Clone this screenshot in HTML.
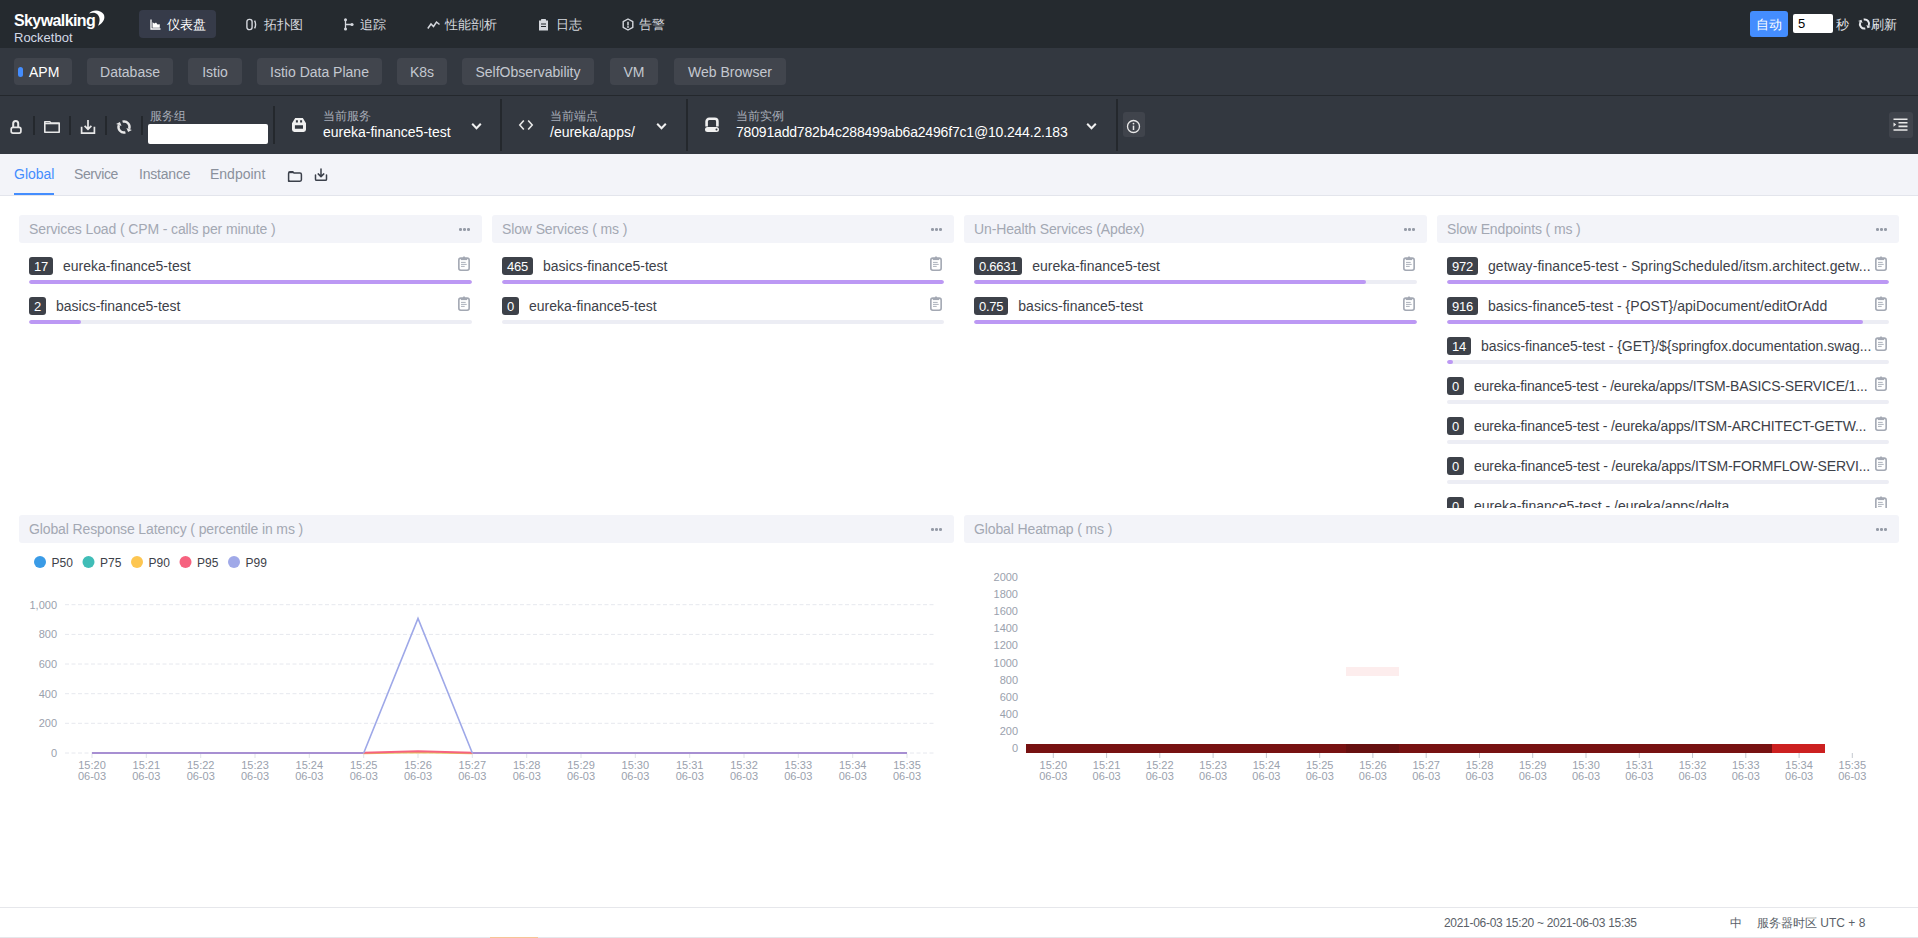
<!DOCTYPE html>
<html><head><meta charset="utf-8">
<style>
*{margin:0;padding:0;box-sizing:border-box}
html,body{width:1918px;height:938px;overflow:hidden;background:#fff;font-family:"Liberation Sans",sans-serif;position:relative}
.a{position:absolute}
.hdr{left:0;top:0;width:1918px;height:48px;background:#252a2f}
.bar2{left:0;top:48px;width:1918px;height:47px;background:#333840}
.bar2line{left:0;top:95px;width:1918px;height:1px;background:#24282d}
.tool{left:0;top:96px;width:1918px;height:58px;background:#333840}
.subnav{left:0;top:154px;width:1918px;height:41px;background:#f3f4f9}
.subline{left:0;top:195px;width:1918px;height:1px;background:#e3e5ec}
.nav{color:#d5d8de;font-size:13px;line-height:16px;top:17px;white-space:nowrap}
.navact{left:139px;top:10px;width:77px;height:28px;background:#363b49;border-radius:4px}
.tab{top:58px;height:27px;background:#41454d;border-radius:4px;color:#c4c8d0;font-size:14px;line-height:29px;text-align:center;white-space:nowrap}
.sep{width:2px;background:#24282d}
.lbl{color:#a8adb8;font-size:12px;line-height:14px;top:109px;white-space:nowrap}
.val{color:#fff;font-size:14px;line-height:16px;top:124px;white-space:nowrap}
.sn{top:166px;font-size:14px;line-height:16px;color:#8a909c;white-space:nowrap}
.ph{height:28px;background:#f3f4f9;border-radius:3px}
.pt{font-size:14px;line-height:16px;color:#a3a8b3;white-space:nowrap;letter-spacing:-0.12px}
.dots{width:12px;height:3px}
.badge{height:18px;background:#3d4149;color:#fff;border-radius:3px;font-size:13px;line-height:20px;padding:0 5px;white-space:nowrap;letter-spacing:-0.25px;overflow:hidden}
.itxt{font-size:14px;line-height:16px;color:#3d4149;white-space:nowrap}
.trk{height:4px;background:#ecedf4;border-radius:2px;overflow:hidden}
.fil{height:4px;background:#bc98f4;border-radius:2px}
.clip{width:12px;height:15px}
.ax{font-size:12px;line-height:12px;color:#9aa1ad;white-space:nowrap}
.foot{top:907px;left:0;width:1918px;height:1px;background:#e6e7eb}
</style></head><body>
<!-- header -->
<div class="a hdr"></div>
<div class="a" style="left:14px;top:12px;color:#fff;font-weight:bold;font-size:16px;line-height:18px;letter-spacing:-0.6px">Skywalking</div>
<div class="a" style="left:14px;top:31px;color:#d3d9e6;font-size:13px;line-height:13px">Rocketbot</div>
<div class="a navact"></div>
<div class="a nav" style="left:167px;color:#fff">仪表盘</div>
<div class="a nav" style="left:264px">拓扑图</div>
<div class="a nav" style="left:360px">追踪</div>
<div class="a nav" style="left:445px">性能剖析</div>
<div class="a nav" style="left:556px">日志</div>
<div class="a nav" style="left:639px">告警</div>

<div class="a" style="left:1750px;top:11px;width:38px;height:26px;background:#448dfe;border-radius:3px;color:#fff;font-size:13px;line-height:28px;text-align:center">自动</div>
<div class="a" style="left:1793px;top:14px;width:40px;height:19px;background:#fff;border-radius:2px;color:#000;font-size:13px;line-height:20px;padding-left:5px">5</div>
<div class="a nav" style="left:1836px;top:17px;color:#e6e8ec">秒</div>
<div class="a nav" style="left:1871px;top:17px;color:#e6e8ec">刷新</div>

<!-- bar2 -->
<div class="a bar2"></div>
<div class="a bar2line"></div>
<div class="a tab" style="left:14px;width:58px;background:#41454d;color:#fff;text-align:left;padding-left:15px">APM</div>
<div class="a" style="left:18px;top:67px;width:5px;height:10px;background:#448dfe;border-radius:3px"></div>
<div class="a tab" style="left:87px;width:86px">Database</div>
<div class="a tab" style="left:188px;width:54px">Istio</div>
<div class="a tab" style="left:257px;width:125px">Istio Data Plane</div>
<div class="a tab" style="left:397px;width:50px">K8s</div>
<div class="a tab" style="left:462px;width:132px">SelfObservability</div>
<div class="a tab" style="left:610px;width:48px">VM</div>
<div class="a tab" style="left:674px;width:112px">Web Browser</div>

<!-- toolbar -->
<div class="a tool"></div>
<div class="a sep" style="left:33px;top:116px;height:19px"></div>
<div class="a sep" style="left:69px;top:116px;height:19px"></div>
<div class="a sep" style="left:105px;top:116px;height:19px"></div>
<div class="a sep" style="left:141px;top:116px;height:19px"></div>
<div class="a lbl" style="left:150px">服务组</div>
<div class="a" style="left:148px;top:124px;width:120px;height:20px;background:#fff;border-radius:2px"></div>
<div class="a sep" style="left:273px;top:106px;height:38px"></div>
<div class="a lbl" style="left:323px">当前服务</div>
<div class="a val" style="left:323px">eureka-finance5-test</div>
<div class="a sep" style="left:500px;top:99px;height:52px"></div>
<div class="a lbl" style="left:550px">当前端点</div>
<div class="a val" style="left:550px">/eureka/apps/</div>
<div class="a sep" style="left:686px;top:99px;height:52px"></div>
<div class="a lbl" style="left:736px">当前实例</div>
<div class="a val" style="left:736px;letter-spacing:-0.18px">78091add782b4c288499ab6a2496f7c1@10.244.2.183</div>
<div class="a sep" style="left:1116px;top:99px;height:52px"></div>
<div class="a" style="left:1123px;top:112px;width:22px;height:25px;background:#40444c;border-radius:3px"></div>
<div class="a" style="left:1889px;top:112px;width:24px;height:26px;background:#40444c;border-radius:3px"></div>

<!-- subnav -->
<div class="a subnav"></div>
<div class="a subline"></div>
<div class="a sn" style="left:14px;color:#448dfe">Global</div>
<div class="a" style="left:14px;top:193px;width:40px;height:2px;background:#448dfe"></div>
<div class="a sn" style="left:74px;letter-spacing:-0.4px">Service</div>
<div class="a sn" style="left:139px;letter-spacing:-0.2px">Instance</div>
<div class="a sn" style="left:210px">Endpoint</div>

<!--I-->
<!-- nav icons -->
<svg class="a" style="left:150px;top:19px" width="11" height="11" viewBox="0 0 11 11"><path d="M1 0.5V10H10.5" fill="none" stroke="#fff" stroke-width="1.3"/><path d="M2.5 8.8V3.2L4.5 4.6L6 3.6L7.6 5.6L9.8 5.2V8.8Z" fill="#fff"/></svg>
<svg class="a" style="left:246px;top:18px" width="12" height="13" viewBox="0 0 12 13"><rect x="0.9" y="1.4" width="5.2" height="10.2" rx="2.3" fill="none" stroke="#d5d8de" stroke-width="1.4"/><path d="M8.6 2.6Q10.6 6.5 8.6 10.4" fill="none" stroke="#d5d8de" stroke-width="1.4"/></svg>
<svg class="a" style="left:343px;top:18px" width="12" height="13" viewBox="0 0 12 13"><path d="M2.5 1V12M2.5 6.5H8.5" fill="none" stroke="#d5d8de" stroke-width="1.3"/><circle cx="2.5" cy="1.8" r="1.5" fill="#d5d8de"/><circle cx="2.5" cy="11" r="1.5" fill="#d5d8de"/><circle cx="9" cy="6.5" r="1.6" fill="#d5d8de"/></svg>
<svg class="a" style="left:427px;top:19px" width="13" height="11" viewBox="0 0 13 11"><path d="M0.8 9.5L4 5L6.5 7.5L9.5 3L12.5 5.5" fill="none" stroke="#d5d8de" stroke-width="1.5"/></svg>
<svg class="a" style="left:538px;top:18px" width="11" height="13" viewBox="0 0 11 13"><path d="M1 2.5H10V12.5H1Z" fill="#d5d8de"/><rect x="3" y="1" width="5" height="2.5" rx="0.6" fill="#d5d8de"/><path d="M3 6H8M3 8.5H8" stroke="#25292e" stroke-width="1.1"/></svg>
<svg class="a" style="left:622px;top:18px" width="12" height="13" viewBox="0 0 12 13"><path d="M6 1L10.8 3.6V9.4L6 12L1.2 9.4V3.6Z" fill="none" stroke="#d5d8de" stroke-width="1.4" stroke-linejoin="round"/><path d="M6 3.8V7.4" stroke="#d5d8de" stroke-width="1.5"/><circle cx="6" cy="9" r="0.9" fill="#d5d8de"/></svg>
<svg class="a" style="left:1857px;top:16px" width="15" height="16" viewBox="0 0 18 16"><g transform="rotate(5 9 8)"><path d="M7.58 2.69A5.5 5.5 0 0 1 14.17 9.88" fill="none" stroke="#e6e8ec" stroke-width="2.4"/><path d="M16.9 10.9L11.4 8.9L13.1 12.9Z" fill="#e6e8ec"/><path d="M10.42 13.31A5.5 5.5 0 0 1 3.83 6.12" fill="none" stroke="#e6e8ec" stroke-width="2.4"/><path d="M1.1 5.1L6.6 7.1L4.9 3.1Z" fill="#e6e8ec"/></g></svg>
<!-- toolbar icons -->
<svg class="a" style="left:9px;top:119px" width="14" height="16" viewBox="0 0 14 16"><path d="M4.2 8V4.4A2.5 2.5 0 0 1 9.2 4.4V8" fill="none" stroke="#e8e8e8" stroke-width="2"/><rect x="2.2" y="8.3" width="9.7" height="5.8" rx="1.8" fill="none" stroke="#e8e8e8" stroke-width="1.7"/></svg>
<svg class="a" style="left:43px;top:120px" width="18" height="14" viewBox="0 0 18 14"><path d="M1.8 12.2V1.8H6.8L8 3H16.2V12.2Z" fill="none" stroke="#e8e8e8" stroke-width="1.6" stroke-linejoin="round"/><path d="M1.8 3.6H16.2" stroke="#e8e8e8" stroke-width="1.4"/></svg>
<svg class="a" style="left:80px;top:119px" width="16" height="16" viewBox="0 0 16 16"><path d="M8 1V10.2M4.6 6.8L8 10.2L11.4 6.8" fill="none" stroke="#e8e8e8" stroke-width="1.7"/><path d="M1.6 7.8V14.2H14.4V7.8" fill="none" stroke="#e8e8e8" stroke-width="1.7"/></svg>
<svg class="a" style="left:115px;top:119px" width="18" height="16" viewBox="0 0 18 16"><path d="M7.58 2.69A5.5 5.5 0 0 1 14.17 9.88" fill="none" stroke="#e8e8e8" stroke-width="2.4"/><path d="M16.9 10.9L11.4 8.9L13.1 12.9Z" fill="#e8e8e8"/><path d="M10.42 13.31A5.5 5.5 0 0 1 3.83 6.12" fill="none" stroke="#e8e8e8" stroke-width="2.4"/><path d="M1.1 5.1L6.6 7.1L4.9 3.1Z" fill="#e8e8e8"/></svg>
<svg class="a" style="left:291px;top:117px" width="16" height="16" viewBox="0 0 16 16"><path fill="#f0f0f0" fill-rule="evenodd" d="M4.2 0.9H11.8L15 6.2V12.6A2.4 2.4 0 0 1 12.6 15H3.4A2.4 2.4 0 0 1 1 12.6V6.2ZM4.9 3.3V5.6H6.9V3.3ZM9.1 3.3V5.6H11.1V3.3ZM3.9 8.3V11.8H12V8.3Z"/></svg>
<svg class="a" style="left:518px;top:119px" width="16" height="12" viewBox="0 0 16 12"><path d="M5.8 1.5L1.8 6L5.8 10.5M10.2 1.5L14.2 6L10.2 10.5" fill="none" stroke="#e8e8e8" stroke-width="1.6"/></svg>
<svg class="a" style="left:704px;top:117px" width="16" height="16" viewBox="0 0 16 16"><path d="M2.6 9.5V4.4A2.6 2.6 0 0 1 5.2 1.8H10.8A2.6 2.6 0 0 1 13.4 4.4V9.5" fill="none" stroke="#f0f0f0" stroke-width="2.6"/><rect x="1" y="10" width="14" height="5" rx="2.5" fill="#f0f0f0"/><circle cx="12.5" cy="12.5" r="1" fill="#333840"/></svg>
<svg class="a" style="left:471px;top:122px" width="11" height="9" viewBox="0 0 11 9"><path d="M1.2 1.8L5.5 6.2L9.8 1.8" fill="none" stroke="#f0f0f0" stroke-width="2"/></svg>
<svg class="a" style="left:656px;top:122px" width="11" height="9" viewBox="0 0 11 9"><path d="M1.2 1.8L5.5 6.2L9.8 1.8" fill="none" stroke="#f0f0f0" stroke-width="2"/></svg>
<svg class="a" style="left:1086px;top:122px" width="11" height="9" viewBox="0 0 11 9"><path d="M1.2 1.8L5.5 6.2L9.8 1.8" fill="none" stroke="#f0f0f0" stroke-width="2"/></svg>
<svg class="a" style="left:1126px;top:119px" width="16" height="16" viewBox="0 0 16 16"><circle cx="7.5" cy="7.5" r="6" fill="none" stroke="#e8e8e8" stroke-width="1.3"/><path d="M7.5 6.6V11" stroke="#e8e8e8" stroke-width="1.5"/><circle cx="7.5" cy="4.6" r="0.9" fill="#e8e8e8"/></svg>
<svg class="a" style="left:1892px;top:117px" width="17" height="17" viewBox="0 0 17 17"><path d="M1.5 2.2H15.5M6.5 5.8H15.5M6.5 9.4H15.5M1.5 13H15.5" stroke="#e8e8e8" stroke-width="1.6"/><path d="M1.5 5.4L4.2 7.6L1.5 9.8Z" fill="#e8e8e8"/></svg>
<!-- subnav icons -->
<svg class="a" style="left:287px;top:170px" width="16" height="13" viewBox="0 0 16 13"><path d="M1.6 11.2V3.4Q1.6 1.8 3 1.8H5.8L7 3H13Q14.4 3 14.4 4.4V9.8Q14.4 11.2 13 11.2H3Q1.6 11.2 1.6 9.8Z" fill="none" stroke="#3b404b" stroke-width="1.5" stroke-linejoin="round"/><path d="M2 2.5H6.2" stroke="#3b404b" stroke-width="1.4"/></svg>
<svg class="a" style="left:314px;top:168px" width="14" height="14" viewBox="0 0 14 14"><path d="M7 1V8.6M4.2 5.9L7 8.6L9.8 5.9" fill="none" stroke="#3b404b" stroke-width="1.5" stroke-linecap="round" stroke-linejoin="round"/><path d="M1.5 7V11.2Q1.5 12.3 2.6 12.3H11.4Q12.5 12.3 12.5 11.2V7" fill="none" stroke="#3b404b" stroke-width="1.5" stroke-linecap="round"/></svg>
<!-- logo crescent -->
<svg class="a" style="left:88px;top:9px" width="18" height="18" viewBox="0 0 18 18"><path d="M1 4.5C4 0.5 12 0 15.5 5C18 9 15 14.5 10 16.8C12.5 12 12 7.5 9 5C6.5 3 3.5 3.5 1 4.5Z" fill="#fff"/></svg>
<!--/I-->

<!-- PANELS -->
<!--P-->
<div class="a ph" style="left:19px;top:215px;width:463px"></div>
<div class="a pt" style="left:29px;top:221px">Services Load ( CPM - calls per minute )</div>
<div class="a" style="left:459px;top:228px;width:2.6px;height:2.6px;border-radius:50%;background:#959ba7"></div>
<div class="a" style="left:463px;top:228px;width:2.6px;height:2.6px;border-radius:50%;background:#959ba7"></div>
<div class="a" style="left:467px;top:228px;width:2.6px;height:2.6px;border-radius:50%;background:#959ba7"></div>
<div class="a ph" style="left:492px;top:215px;width:462px"></div>
<div class="a pt" style="left:502px;top:221px">Slow Services ( ms )</div>
<div class="a" style="left:931px;top:228px;width:2.6px;height:2.6px;border-radius:50%;background:#959ba7"></div>
<div class="a" style="left:935px;top:228px;width:2.6px;height:2.6px;border-radius:50%;background:#959ba7"></div>
<div class="a" style="left:939px;top:228px;width:2.6px;height:2.6px;border-radius:50%;background:#959ba7"></div>
<div class="a ph" style="left:964px;top:215px;width:463px"></div>
<div class="a pt" style="left:974px;top:221px">Un-Health Services (Apdex)</div>
<div class="a" style="left:1404px;top:228px;width:2.6px;height:2.6px;border-radius:50%;background:#959ba7"></div>
<div class="a" style="left:1408px;top:228px;width:2.6px;height:2.6px;border-radius:50%;background:#959ba7"></div>
<div class="a" style="left:1412px;top:228px;width:2.6px;height:2.6px;border-radius:50%;background:#959ba7"></div>
<div class="a ph" style="left:1437px;top:215px;width:462px"></div>
<div class="a pt" style="left:1447px;top:221px">Slow Endpoints ( ms )</div>
<div class="a" style="left:1876px;top:228px;width:2.6px;height:2.6px;border-radius:50%;background:#959ba7"></div>
<div class="a" style="left:1880px;top:228px;width:2.6px;height:2.6px;border-radius:50%;background:#959ba7"></div>
<div class="a" style="left:1884px;top:228px;width:2.6px;height:2.6px;border-radius:50%;background:#959ba7"></div>
<div class="a" style="left:29px;top:257px;width:443px;height:18px;display:flex;align-items:center"><div class="badge" style="flex:none">17</div><div class="itxt" style="flex:1;min-width:0;margin-left:10px;overflow:hidden;padding-right:0;letter-spacing:0px">eureka-finance5-test</div><div style="flex:none;width:12px;height:18px"></div></div>
<svg class="a" style="left:458px;top:256px" width="12" height="15" viewBox="0 0 12 15"><rect x="0.85" y="2.1" width="10.3" height="12.1" rx="1.9" fill="none" stroke="#a3a8b3" stroke-width="1.6"/><rect x="4.9" y="0.6" width="2.2" height="2" rx="0.6" fill="#a3a8b3"/><path d="M2.8 3.5H9.2" stroke="#a3a8b3" stroke-width="1.2"/><path d="M3 6.4H7.7M3 8.4H8.7M3 10.4H6.7" stroke="#a3a8b3" stroke-width="0.9"/></svg>
<div class="a trk" style="left:29px;top:280px;width:443px"><div class="fil" style="width:100.00%"></div></div>
<div class="a" style="left:29px;top:297px;width:443px;height:18px;display:flex;align-items:center"><div class="badge" style="flex:none">2</div><div class="itxt" style="flex:1;min-width:0;margin-left:10px;overflow:hidden;padding-right:0;letter-spacing:0px">basics-finance5-test</div><div style="flex:none;width:12px;height:18px"></div></div>
<svg class="a" style="left:458px;top:296px" width="12" height="15" viewBox="0 0 12 15"><rect x="0.85" y="2.1" width="10.3" height="12.1" rx="1.9" fill="none" stroke="#a3a8b3" stroke-width="1.6"/><rect x="4.9" y="0.6" width="2.2" height="2" rx="0.6" fill="#a3a8b3"/><path d="M2.8 3.5H9.2" stroke="#a3a8b3" stroke-width="1.2"/><path d="M3 6.4H7.7M3 8.4H8.7M3 10.4H6.7" stroke="#a3a8b3" stroke-width="0.9"/></svg>
<div class="a trk" style="left:29px;top:320px;width:443px"><div class="fil" style="width:11.76%"></div></div>
<div class="a" style="left:502px;top:257px;width:442px;height:18px;display:flex;align-items:center"><div class="badge" style="flex:none">465</div><div class="itxt" style="flex:1;min-width:0;margin-left:10px;overflow:hidden;padding-right:0;letter-spacing:0px">basics-finance5-test</div><div style="flex:none;width:12px;height:18px"></div></div>
<svg class="a" style="left:930px;top:256px" width="12" height="15" viewBox="0 0 12 15"><rect x="0.85" y="2.1" width="10.3" height="12.1" rx="1.9" fill="none" stroke="#a3a8b3" stroke-width="1.6"/><rect x="4.9" y="0.6" width="2.2" height="2" rx="0.6" fill="#a3a8b3"/><path d="M2.8 3.5H9.2" stroke="#a3a8b3" stroke-width="1.2"/><path d="M3 6.4H7.7M3 8.4H8.7M3 10.4H6.7" stroke="#a3a8b3" stroke-width="0.9"/></svg>
<div class="a trk" style="left:502px;top:280px;width:442px"><div class="fil" style="width:100.00%"></div></div>
<div class="a" style="left:502px;top:297px;width:442px;height:18px;display:flex;align-items:center"><div class="badge" style="flex:none">0</div><div class="itxt" style="flex:1;min-width:0;margin-left:10px;overflow:hidden;padding-right:0;letter-spacing:0px">eureka-finance5-test</div><div style="flex:none;width:12px;height:18px"></div></div>
<svg class="a" style="left:930px;top:296px" width="12" height="15" viewBox="0 0 12 15"><rect x="0.85" y="2.1" width="10.3" height="12.1" rx="1.9" fill="none" stroke="#a3a8b3" stroke-width="1.6"/><rect x="4.9" y="0.6" width="2.2" height="2" rx="0.6" fill="#a3a8b3"/><path d="M2.8 3.5H9.2" stroke="#a3a8b3" stroke-width="1.2"/><path d="M3 6.4H7.7M3 8.4H8.7M3 10.4H6.7" stroke="#a3a8b3" stroke-width="0.9"/></svg>
<div class="a trk" style="left:502px;top:320px;width:442px"><div class="fil" style="width:0.00%"></div></div>
<div class="a" style="left:974px;top:257px;width:443px;height:18px;display:flex;align-items:center"><div class="badge" style="flex:none">0.6631</div><div class="itxt" style="flex:1;min-width:0;margin-left:10px;overflow:hidden;padding-right:0;letter-spacing:0px">eureka-finance5-test</div><div style="flex:none;width:12px;height:18px"></div></div>
<svg class="a" style="left:1403px;top:256px" width="12" height="15" viewBox="0 0 12 15"><rect x="0.85" y="2.1" width="10.3" height="12.1" rx="1.9" fill="none" stroke="#a3a8b3" stroke-width="1.6"/><rect x="4.9" y="0.6" width="2.2" height="2" rx="0.6" fill="#a3a8b3"/><path d="M2.8 3.5H9.2" stroke="#a3a8b3" stroke-width="1.2"/><path d="M3 6.4H7.7M3 8.4H8.7M3 10.4H6.7" stroke="#a3a8b3" stroke-width="0.9"/></svg>
<div class="a trk" style="left:974px;top:280px;width:443px"><div class="fil" style="width:88.40%"></div></div>
<div class="a" style="left:974px;top:297px;width:443px;height:18px;display:flex;align-items:center"><div class="badge" style="flex:none">0.75</div><div class="itxt" style="flex:1;min-width:0;margin-left:10px;overflow:hidden;padding-right:0;letter-spacing:0px">basics-finance5-test</div><div style="flex:none;width:12px;height:18px"></div></div>
<svg class="a" style="left:1403px;top:296px" width="12" height="15" viewBox="0 0 12 15"><rect x="0.85" y="2.1" width="10.3" height="12.1" rx="1.9" fill="none" stroke="#a3a8b3" stroke-width="1.6"/><rect x="4.9" y="0.6" width="2.2" height="2" rx="0.6" fill="#a3a8b3"/><path d="M2.8 3.5H9.2" stroke="#a3a8b3" stroke-width="1.2"/><path d="M3 6.4H7.7M3 8.4H8.7M3 10.4H6.7" stroke="#a3a8b3" stroke-width="0.9"/></svg>
<div class="a trk" style="left:974px;top:320px;width:443px"><div class="fil" style="width:100.00%"></div></div>
<div class="a" style="left:0;top:0;width:1918px;height:508px;overflow:hidden">
<div class="a" style="left:1447px;top:257px;width:442px;height:18px;display:flex;align-items:center"><div class="badge" style="flex:none">972</div><div class="itxt" style="flex:1;min-width:0;margin-left:10px;overflow:hidden;padding-right:0;letter-spacing:0.06px">getway-finance5-test - SpringScheduled/itsm.architect.getw...</div><div style="flex:none;width:12px;height:18px"></div></div>
<svg class="a" style="left:1875px;top:256px" width="12" height="15" viewBox="0 0 12 15"><rect x="0.85" y="2.1" width="10.3" height="12.1" rx="1.9" fill="none" stroke="#a3a8b3" stroke-width="1.6"/><rect x="4.9" y="0.6" width="2.2" height="2" rx="0.6" fill="#a3a8b3"/><path d="M2.8 3.5H9.2" stroke="#a3a8b3" stroke-width="1.2"/><path d="M3 6.4H7.7M3 8.4H8.7M3 10.4H6.7" stroke="#a3a8b3" stroke-width="0.9"/></svg>
<div class="a trk" style="left:1447px;top:280px;width:442px"><div class="fil" style="width:100.00%"></div></div>
<div class="a" style="left:1447px;top:297px;width:442px;height:18px;display:flex;align-items:center"><div class="badge" style="flex:none">916</div><div class="itxt" style="flex:1;min-width:0;margin-left:10px;overflow:hidden;padding-right:0;letter-spacing:0.03px">basics-finance5-test - {POST}/apiDocument/editOrAdd</div><div style="flex:none;width:12px;height:18px"></div></div>
<svg class="a" style="left:1875px;top:296px" width="12" height="15" viewBox="0 0 12 15"><rect x="0.85" y="2.1" width="10.3" height="12.1" rx="1.9" fill="none" stroke="#a3a8b3" stroke-width="1.6"/><rect x="4.9" y="0.6" width="2.2" height="2" rx="0.6" fill="#a3a8b3"/><path d="M2.8 3.5H9.2" stroke="#a3a8b3" stroke-width="1.2"/><path d="M3 6.4H7.7M3 8.4H8.7M3 10.4H6.7" stroke="#a3a8b3" stroke-width="0.9"/></svg>
<div class="a trk" style="left:1447px;top:320px;width:442px"><div class="fil" style="width:94.20%"></div></div>
<div class="a" style="left:1447px;top:337px;width:442px;height:18px;display:flex;align-items:center"><div class="badge" style="flex:none">14</div><div class="itxt" style="flex:1;min-width:0;margin-left:10px;overflow:hidden;padding-right:0;letter-spacing:-0.03px">basics-finance5-test - {GET}/${springfox.documentation.swag...</div><div style="flex:none;width:12px;height:18px"></div></div>
<svg class="a" style="left:1875px;top:336px" width="12" height="15" viewBox="0 0 12 15"><rect x="0.85" y="2.1" width="10.3" height="12.1" rx="1.9" fill="none" stroke="#a3a8b3" stroke-width="1.6"/><rect x="4.9" y="0.6" width="2.2" height="2" rx="0.6" fill="#a3a8b3"/><path d="M2.8 3.5H9.2" stroke="#a3a8b3" stroke-width="1.2"/><path d="M3 6.4H7.7M3 8.4H8.7M3 10.4H6.7" stroke="#a3a8b3" stroke-width="0.9"/></svg>
<div class="a trk" style="left:1447px;top:360px;width:442px"><div class="fil" style="width:1.44%"></div></div>
<div class="a" style="left:1447px;top:377px;width:442px;height:18px;display:flex;align-items:center"><div class="badge" style="flex:none">0</div><div class="itxt" style="flex:1;min-width:0;margin-left:10px;overflow:hidden;padding-right:0;letter-spacing:-0.17px">eureka-finance5-test - /eureka/apps/ITSM-BASICS-SERVICE/1...</div><div style="flex:none;width:12px;height:18px"></div></div>
<svg class="a" style="left:1875px;top:376px" width="12" height="15" viewBox="0 0 12 15"><rect x="0.85" y="2.1" width="10.3" height="12.1" rx="1.9" fill="none" stroke="#a3a8b3" stroke-width="1.6"/><rect x="4.9" y="0.6" width="2.2" height="2" rx="0.6" fill="#a3a8b3"/><path d="M2.8 3.5H9.2" stroke="#a3a8b3" stroke-width="1.2"/><path d="M3 6.4H7.7M3 8.4H8.7M3 10.4H6.7" stroke="#a3a8b3" stroke-width="0.9"/></svg>
<div class="a trk" style="left:1447px;top:400px;width:442px"><div class="fil" style="width:0.00%"></div></div>
<div class="a" style="left:1447px;top:417px;width:442px;height:18px;display:flex;align-items:center"><div class="badge" style="flex:none">0</div><div class="itxt" style="flex:1;min-width:0;margin-left:10px;overflow:hidden;padding-right:0;letter-spacing:-0.13px">eureka-finance5-test - /eureka/apps/ITSM-ARCHITECT-GETW...</div><div style="flex:none;width:12px;height:18px"></div></div>
<svg class="a" style="left:1875px;top:416px" width="12" height="15" viewBox="0 0 12 15"><rect x="0.85" y="2.1" width="10.3" height="12.1" rx="1.9" fill="none" stroke="#a3a8b3" stroke-width="1.6"/><rect x="4.9" y="0.6" width="2.2" height="2" rx="0.6" fill="#a3a8b3"/><path d="M2.8 3.5H9.2" stroke="#a3a8b3" stroke-width="1.2"/><path d="M3 6.4H7.7M3 8.4H8.7M3 10.4H6.7" stroke="#a3a8b3" stroke-width="0.9"/></svg>
<div class="a trk" style="left:1447px;top:440px;width:442px"><div class="fil" style="width:0.00%"></div></div>
<div class="a" style="left:1447px;top:457px;width:442px;height:18px;display:flex;align-items:center"><div class="badge" style="flex:none">0</div><div class="itxt" style="flex:1;min-width:0;margin-left:10px;overflow:hidden;padding-right:0;letter-spacing:-0.11px">eureka-finance5-test - /eureka/apps/ITSM-FORMFLOW-SERVI...</div><div style="flex:none;width:12px;height:18px"></div></div>
<svg class="a" style="left:1875px;top:456px" width="12" height="15" viewBox="0 0 12 15"><rect x="0.85" y="2.1" width="10.3" height="12.1" rx="1.9" fill="none" stroke="#a3a8b3" stroke-width="1.6"/><rect x="4.9" y="0.6" width="2.2" height="2" rx="0.6" fill="#a3a8b3"/><path d="M2.8 3.5H9.2" stroke="#a3a8b3" stroke-width="1.2"/><path d="M3 6.4H7.7M3 8.4H8.7M3 10.4H6.7" stroke="#a3a8b3" stroke-width="0.9"/></svg>
<div class="a trk" style="left:1447px;top:480px;width:442px"><div class="fil" style="width:0.00%"></div></div>
<div class="a" style="left:1447px;top:497px;width:442px;height:18px;display:flex;align-items:center"><div class="badge" style="flex:none">0</div><div class="itxt" style="flex:1;min-width:0;margin-left:10px;overflow:hidden;padding-right:0;letter-spacing:0px">eureka-finance5-test - /eureka/apps/delta</div><div style="flex:none;width:12px;height:18px"></div></div>
<svg class="a" style="left:1875px;top:496px" width="12" height="15" viewBox="0 0 12 15"><rect x="0.85" y="2.1" width="10.3" height="12.1" rx="1.9" fill="none" stroke="#a3a8b3" stroke-width="1.6"/><rect x="4.9" y="0.6" width="2.2" height="2" rx="0.6" fill="#a3a8b3"/><path d="M2.8 3.5H9.2" stroke="#a3a8b3" stroke-width="1.2"/><path d="M3 6.4H7.7M3 8.4H8.7M3 10.4H6.7" stroke="#a3a8b3" stroke-width="0.9"/></svg>
<div class="a trk" style="left:1447px;top:520px;width:442px"><div class="fil" style="width:0.00%"></div></div>
</div>
<div class="a ph" style="left:19px;top:515px;width:935px"></div>
<div class="a pt" style="left:29px;top:521px">Global Response Latency ( percentile in ms )</div>
<div class="a" style="left:931px;top:528px;width:2.6px;height:2.6px;border-radius:50%;background:#959ba7"></div>
<div class="a" style="left:935px;top:528px;width:2.6px;height:2.6px;border-radius:50%;background:#959ba7"></div>
<div class="a" style="left:939px;top:528px;width:2.6px;height:2.6px;border-radius:50%;background:#959ba7"></div>
<div class="a ph" style="left:964px;top:515px;width:935px"></div>
<div class="a pt" style="left:974px;top:521px">Global Heatmap ( ms )</div>
<div class="a" style="left:1876px;top:528px;width:2.6px;height:2.6px;border-radius:50%;background:#959ba7"></div>
<div class="a" style="left:1880px;top:528px;width:2.6px;height:2.6px;border-radius:50%;background:#959ba7"></div>
<div class="a" style="left:1884px;top:528px;width:2.6px;height:2.6px;border-radius:50%;background:#959ba7"></div>
<!--/P-->

<!--C-->
<svg class="a" style="left:0;top:540px" width="960" height="260" viewBox="0 540 960 260">
<circle cx="40.0" cy="562" r="6" fill="#3a9be6"/>
<text x="51.5" y="566.5" font-size="12" fill="#3d4149">P50</text>
<circle cx="88.5" cy="562" r="6" fill="#40bdb7"/>
<text x="100.0" y="566.5" font-size="12" fill="#3d4149">P75</text>
<circle cx="137.0" cy="562" r="6" fill="#fdc651"/>
<text x="148.5" y="566.5" font-size="12" fill="#3d4149">P90</text>
<circle cx="185.5" cy="562" r="6" fill="#f6627f"/>
<text x="197.0" y="566.5" font-size="12" fill="#3d4149">P95</text>
<circle cx="234.0" cy="562" r="6" fill="#a0a9e8"/>
<text x="245.5" y="566.5" font-size="12" fill="#3d4149">P99</text>
<line x1="65" y1="604.7" x2="934" y2="604.7" stroke="#e6e8ee" stroke-width="1" stroke-dasharray="4 2.5"/>
<text x="57" y="608.7" font-size="11" fill="#9aa1ad" text-anchor="end">1,000</text>
<line x1="65" y1="634.4" x2="934" y2="634.4" stroke="#e6e8ee" stroke-width="1" stroke-dasharray="4 2.5"/>
<text x="57" y="638.4" font-size="11" fill="#9aa1ad" text-anchor="end">800</text>
<line x1="65" y1="664.0" x2="934" y2="664.0" stroke="#e6e8ee" stroke-width="1" stroke-dasharray="4 2.5"/>
<text x="57" y="668.0" font-size="11" fill="#9aa1ad" text-anchor="end">600</text>
<line x1="65" y1="693.7" x2="934" y2="693.7" stroke="#e6e8ee" stroke-width="1" stroke-dasharray="4 2.5"/>
<text x="57" y="697.7" font-size="11" fill="#9aa1ad" text-anchor="end">400</text>
<line x1="65" y1="723.3" x2="934" y2="723.3" stroke="#e6e8ee" stroke-width="1" stroke-dasharray="4 2.5"/>
<text x="57" y="727.3" font-size="11" fill="#9aa1ad" text-anchor="end">200</text>
<line x1="65" y1="753.0" x2="934" y2="753.0" stroke="#e6e8ee" stroke-width="1" stroke-dasharray="4 2.5"/>
<text x="57" y="757.0" font-size="11" fill="#9aa1ad" text-anchor="end">0</text>
<line x1="92.0" y1="754" x2="92.0" y2="758" stroke="#e0e3e8" stroke-width="1"/>
<text x="92.0" y="769" font-size="11" fill="#9aa1ad" text-anchor="middle">15:20</text>
<text x="92.0" y="780" font-size="11" fill="#9aa1ad" text-anchor="middle">06-03</text>
<line x1="146.3" y1="754" x2="146.3" y2="758" stroke="#e0e3e8" stroke-width="1"/>
<text x="146.3" y="769" font-size="11" fill="#9aa1ad" text-anchor="middle">15:21</text>
<text x="146.3" y="780" font-size="11" fill="#9aa1ad" text-anchor="middle">06-03</text>
<line x1="200.7" y1="754" x2="200.7" y2="758" stroke="#e0e3e8" stroke-width="1"/>
<text x="200.7" y="769" font-size="11" fill="#9aa1ad" text-anchor="middle">15:22</text>
<text x="200.7" y="780" font-size="11" fill="#9aa1ad" text-anchor="middle">06-03</text>
<line x1="255.0" y1="754" x2="255.0" y2="758" stroke="#e0e3e8" stroke-width="1"/>
<text x="255.0" y="769" font-size="11" fill="#9aa1ad" text-anchor="middle">15:23</text>
<text x="255.0" y="780" font-size="11" fill="#9aa1ad" text-anchor="middle">06-03</text>
<line x1="309.3" y1="754" x2="309.3" y2="758" stroke="#e0e3e8" stroke-width="1"/>
<text x="309.3" y="769" font-size="11" fill="#9aa1ad" text-anchor="middle">15:24</text>
<text x="309.3" y="780" font-size="11" fill="#9aa1ad" text-anchor="middle">06-03</text>
<line x1="363.7" y1="754" x2="363.7" y2="758" stroke="#e0e3e8" stroke-width="1"/>
<text x="363.7" y="769" font-size="11" fill="#9aa1ad" text-anchor="middle">15:25</text>
<text x="363.7" y="780" font-size="11" fill="#9aa1ad" text-anchor="middle">06-03</text>
<line x1="418.0" y1="754" x2="418.0" y2="758" stroke="#e0e3e8" stroke-width="1"/>
<text x="418.0" y="769" font-size="11" fill="#9aa1ad" text-anchor="middle">15:26</text>
<text x="418.0" y="780" font-size="11" fill="#9aa1ad" text-anchor="middle">06-03</text>
<line x1="472.3" y1="754" x2="472.3" y2="758" stroke="#e0e3e8" stroke-width="1"/>
<text x="472.3" y="769" font-size="11" fill="#9aa1ad" text-anchor="middle">15:27</text>
<text x="472.3" y="780" font-size="11" fill="#9aa1ad" text-anchor="middle">06-03</text>
<line x1="526.7" y1="754" x2="526.7" y2="758" stroke="#e0e3e8" stroke-width="1"/>
<text x="526.7" y="769" font-size="11" fill="#9aa1ad" text-anchor="middle">15:28</text>
<text x="526.7" y="780" font-size="11" fill="#9aa1ad" text-anchor="middle">06-03</text>
<line x1="581.0" y1="754" x2="581.0" y2="758" stroke="#e0e3e8" stroke-width="1"/>
<text x="581.0" y="769" font-size="11" fill="#9aa1ad" text-anchor="middle">15:29</text>
<text x="581.0" y="780" font-size="11" fill="#9aa1ad" text-anchor="middle">06-03</text>
<line x1="635.3" y1="754" x2="635.3" y2="758" stroke="#e0e3e8" stroke-width="1"/>
<text x="635.3" y="769" font-size="11" fill="#9aa1ad" text-anchor="middle">15:30</text>
<text x="635.3" y="780" font-size="11" fill="#9aa1ad" text-anchor="middle">06-03</text>
<line x1="689.7" y1="754" x2="689.7" y2="758" stroke="#e0e3e8" stroke-width="1"/>
<text x="689.7" y="769" font-size="11" fill="#9aa1ad" text-anchor="middle">15:31</text>
<text x="689.7" y="780" font-size="11" fill="#9aa1ad" text-anchor="middle">06-03</text>
<line x1="744.0" y1="754" x2="744.0" y2="758" stroke="#e0e3e8" stroke-width="1"/>
<text x="744.0" y="769" font-size="11" fill="#9aa1ad" text-anchor="middle">15:32</text>
<text x="744.0" y="780" font-size="11" fill="#9aa1ad" text-anchor="middle">06-03</text>
<line x1="798.3" y1="754" x2="798.3" y2="758" stroke="#e0e3e8" stroke-width="1"/>
<text x="798.3" y="769" font-size="11" fill="#9aa1ad" text-anchor="middle">15:33</text>
<text x="798.3" y="780" font-size="11" fill="#9aa1ad" text-anchor="middle">06-03</text>
<line x1="852.7" y1="754" x2="852.7" y2="758" stroke="#e0e3e8" stroke-width="1"/>
<text x="852.7" y="769" font-size="11" fill="#9aa1ad" text-anchor="middle">15:34</text>
<text x="852.7" y="780" font-size="11" fill="#9aa1ad" text-anchor="middle">06-03</text>
<line x1="907.0" y1="754" x2="907.0" y2="758" stroke="#e0e3e8" stroke-width="1"/>
<text x="907.0" y="769" font-size="11" fill="#9aa1ad" text-anchor="middle">15:35</text>
<text x="907.0" y="780" font-size="11" fill="#9aa1ad" text-anchor="middle">06-03</text>
<polyline points="92,753 363.7,753" fill="none" stroke="#a78fd2" stroke-width="2"/>
<polyline points="472.3,753 907,753" fill="none" stroke="#a78fd2" stroke-width="2"/>
<polyline points="363.7,753.5 418.0,752.5 472.3,753.5" fill="none" stroke="#e3c35a" stroke-width="1.5"/>
<polyline points="363.7,752.8 418.0,751.2 472.3,752.8" fill="none" stroke="#f6627f" stroke-width="2"/>
<polyline points="363.7,753 418.0,618.4 472.3,753" fill="none" stroke="#9ea8e8" stroke-width="1.6" stroke-linejoin="miter"/>
</svg>
<svg class="a" style="left:960px;top:540px" width="958" height="260" viewBox="960 540 958 260">
<text x="1018" y="581.0" font-size="11" fill="#9aa1ad" text-anchor="end">2000</text>
<text x="1018" y="598.1" font-size="11" fill="#9aa1ad" text-anchor="end">1800</text>
<text x="1018" y="615.2" font-size="11" fill="#9aa1ad" text-anchor="end">1600</text>
<text x="1018" y="632.3" font-size="11" fill="#9aa1ad" text-anchor="end">1400</text>
<text x="1018" y="649.4" font-size="11" fill="#9aa1ad" text-anchor="end">1200</text>
<text x="1018" y="666.5" font-size="11" fill="#9aa1ad" text-anchor="end">1000</text>
<text x="1018" y="683.6" font-size="11" fill="#9aa1ad" text-anchor="end">800</text>
<text x="1018" y="700.7" font-size="11" fill="#9aa1ad" text-anchor="end">600</text>
<text x="1018" y="717.8" font-size="11" fill="#9aa1ad" text-anchor="end">400</text>
<text x="1018" y="734.9" font-size="11" fill="#9aa1ad" text-anchor="end">200</text>
<text x="1018" y="752.0" font-size="11" fill="#9aa1ad" text-anchor="end">0</text>
<rect x="1026" y="744" width="746" height="9" fill="#771111"/>
<rect x="1346" y="744" width="53" height="9" fill="#661010"/>
<rect x="1772" y="744" width="53" height="9" fill="#cc2020"/>
<rect x="1346" y="667" width="53" height="9" fill="#fdeded"/>
<line x1="1053.3" y1="753" x2="1053.3" y2="758" stroke="#c3c8cf" stroke-width="1"/>
<text x="1053.3" y="769" font-size="11" fill="#9aa1ad" text-anchor="middle">15:20</text>
<text x="1053.3" y="780" font-size="11" fill="#9aa1ad" text-anchor="middle">06-03</text>
<line x1="1106.6" y1="753" x2="1106.6" y2="758" stroke="#c3c8cf" stroke-width="1"/>
<text x="1106.6" y="769" font-size="11" fill="#9aa1ad" text-anchor="middle">15:21</text>
<text x="1106.6" y="780" font-size="11" fill="#9aa1ad" text-anchor="middle">06-03</text>
<line x1="1159.8" y1="753" x2="1159.8" y2="758" stroke="#c3c8cf" stroke-width="1"/>
<text x="1159.8" y="769" font-size="11" fill="#9aa1ad" text-anchor="middle">15:22</text>
<text x="1159.8" y="780" font-size="11" fill="#9aa1ad" text-anchor="middle">06-03</text>
<line x1="1213.1" y1="753" x2="1213.1" y2="758" stroke="#c3c8cf" stroke-width="1"/>
<text x="1213.1" y="769" font-size="11" fill="#9aa1ad" text-anchor="middle">15:23</text>
<text x="1213.1" y="780" font-size="11" fill="#9aa1ad" text-anchor="middle">06-03</text>
<line x1="1266.4" y1="753" x2="1266.4" y2="758" stroke="#c3c8cf" stroke-width="1"/>
<text x="1266.4" y="769" font-size="11" fill="#9aa1ad" text-anchor="middle">15:24</text>
<text x="1266.4" y="780" font-size="11" fill="#9aa1ad" text-anchor="middle">06-03</text>
<line x1="1319.7" y1="753" x2="1319.7" y2="758" stroke="#c3c8cf" stroke-width="1"/>
<text x="1319.7" y="769" font-size="11" fill="#9aa1ad" text-anchor="middle">15:25</text>
<text x="1319.7" y="780" font-size="11" fill="#9aa1ad" text-anchor="middle">06-03</text>
<line x1="1372.9" y1="753" x2="1372.9" y2="758" stroke="#c3c8cf" stroke-width="1"/>
<text x="1372.9" y="769" font-size="11" fill="#9aa1ad" text-anchor="middle">15:26</text>
<text x="1372.9" y="780" font-size="11" fill="#9aa1ad" text-anchor="middle">06-03</text>
<line x1="1426.2" y1="753" x2="1426.2" y2="758" stroke="#c3c8cf" stroke-width="1"/>
<text x="1426.2" y="769" font-size="11" fill="#9aa1ad" text-anchor="middle">15:27</text>
<text x="1426.2" y="780" font-size="11" fill="#9aa1ad" text-anchor="middle">06-03</text>
<line x1="1479.5" y1="753" x2="1479.5" y2="758" stroke="#c3c8cf" stroke-width="1"/>
<text x="1479.5" y="769" font-size="11" fill="#9aa1ad" text-anchor="middle">15:28</text>
<text x="1479.5" y="780" font-size="11" fill="#9aa1ad" text-anchor="middle">06-03</text>
<line x1="1532.7" y1="753" x2="1532.7" y2="758" stroke="#c3c8cf" stroke-width="1"/>
<text x="1532.7" y="769" font-size="11" fill="#9aa1ad" text-anchor="middle">15:29</text>
<text x="1532.7" y="780" font-size="11" fill="#9aa1ad" text-anchor="middle">06-03</text>
<line x1="1586.0" y1="753" x2="1586.0" y2="758" stroke="#c3c8cf" stroke-width="1"/>
<text x="1586.0" y="769" font-size="11" fill="#9aa1ad" text-anchor="middle">15:30</text>
<text x="1586.0" y="780" font-size="11" fill="#9aa1ad" text-anchor="middle">06-03</text>
<line x1="1639.3" y1="753" x2="1639.3" y2="758" stroke="#c3c8cf" stroke-width="1"/>
<text x="1639.3" y="769" font-size="11" fill="#9aa1ad" text-anchor="middle">15:31</text>
<text x="1639.3" y="780" font-size="11" fill="#9aa1ad" text-anchor="middle">06-03</text>
<line x1="1692.5" y1="753" x2="1692.5" y2="758" stroke="#c3c8cf" stroke-width="1"/>
<text x="1692.5" y="769" font-size="11" fill="#9aa1ad" text-anchor="middle">15:32</text>
<text x="1692.5" y="780" font-size="11" fill="#9aa1ad" text-anchor="middle">06-03</text>
<line x1="1745.8" y1="753" x2="1745.8" y2="758" stroke="#c3c8cf" stroke-width="1"/>
<text x="1745.8" y="769" font-size="11" fill="#9aa1ad" text-anchor="middle">15:33</text>
<text x="1745.8" y="780" font-size="11" fill="#9aa1ad" text-anchor="middle">06-03</text>
<line x1="1799.1" y1="753" x2="1799.1" y2="758" stroke="#c3c8cf" stroke-width="1"/>
<text x="1799.1" y="769" font-size="11" fill="#9aa1ad" text-anchor="middle">15:34</text>
<text x="1799.1" y="780" font-size="11" fill="#9aa1ad" text-anchor="middle">06-03</text>
<line x1="1852.3" y1="753" x2="1852.3" y2="758" stroke="#c3c8cf" stroke-width="1"/>
<text x="1852.3" y="769" font-size="11" fill="#9aa1ad" text-anchor="middle">15:35</text>
<text x="1852.3" y="780" font-size="11" fill="#9aa1ad" text-anchor="middle">06-03</text>
</svg>
<!--/C-->
<!-- footer -->
<div class="a foot"></div>
<div class="a" style="left:1444px;top:916px;font-size:12px;line-height:14px;color:#5a5f69;letter-spacing:-0.3px;white-space:nowrap">2021-06-03 15:20 ~ 2021-06-03 15:35</div>
<div class="a" style="left:1730px;top:916px;font-size:12px;line-height:14px;color:#5a5f69">中</div>
<div class="a" style="left:1757px;top:916px;font-size:12px;line-height:14px;color:#5a5f69;white-space:nowrap">服务器时区 UTC + 8</div>
<div class="a" style="left:0;top:937px;width:1918px;height:1px;background:#e6e7eb"></div>
<div class="a" style="left:490px;top:937px;width:48px;height:1px;background:#f6c596"></div>
</body></html>
